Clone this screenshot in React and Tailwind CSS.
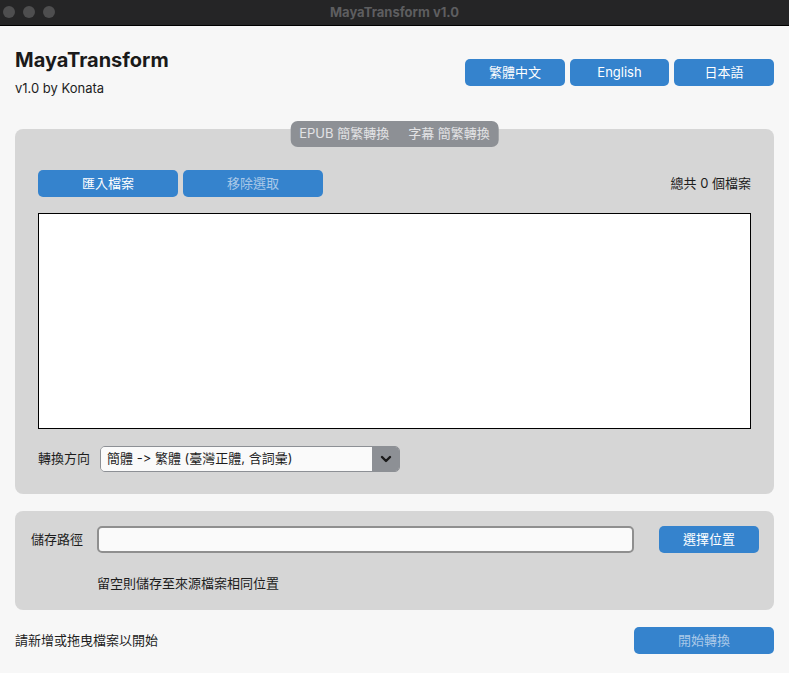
const font = { fontFamily: '"Inter", "Noto Sans CJK TC", sans-serif' };

function BlueButton({ children, disabled, className = '' }) {
  return (
    <button
      className={`h-[27px] rounded-[5px] bg-[#3583cd] text-[13px] ${disabled ? 'text-[#a9c8e8]' : 'text-white'} ${className}`}
    >
      {children}
    </button>
  );
}

export default function App() {
  return (
    <div className="w-[789px] h-[673px] bg-[#f7f7f7] text-[#1d1d1d] overflow-hidden [font-feature-settings:'calt'_0]" style={font}>
      {/* Title bar */}
      <div className="relative h-[26px] bg-[#252526] border-b border-black flex items-center justify-center">
        <div className="absolute left-[3px] top-[6px] flex gap-[8px]">
          <span className="w-[12px] h-[12px] rounded-full bg-[#4e4e4f]" />
          <span className="w-[12px] h-[12px] rounded-full bg-[#4e4e4f]" />
          <span className="w-[12px] h-[12px] rounded-full bg-[#4e4e4f]" />
        </div>
        <span className="text-[13px] font-bold text-[#5e5e60]">MayaTransform v1.0</span>
      </div>

      <div className="px-[15px]">
        {/* Header */}
        <div className="flex justify-between items-start pt-[20px]">
          <div>
            <h1 className="text-[20px] leading-[28px] font-bold text-[#1a1a1a]">MayaTransform</h1>
            <p className="text-[13px] leading-[18px] mt-[5px]">v1.0 by Konata</p>
          </div>
          <div className="flex gap-[5px] mt-[13px]">
            <BlueButton className="w-[100px]">繁體中文</BlueButton>
            <BlueButton className="w-[99px]">English</BlueButton>
            <BlueButton className="w-[100px]">日本語</BlueButton>
          </div>
        </div>

        {/* Main panel */}
        <div className="relative mt-[32px] bg-[#d6d6d6] rounded-[8px] pt-[41px] px-[23px] pb-[22px]">
          <div className="absolute -top-[8px] left-1/2 -translate-x-1/2 h-[26px] px-[9px] rounded-[7px] bg-[#8d9095] flex items-center gap-[19px] text-[13px] text-[#e3e3e5]">
            <span>EPUB 簡繁轉換</span>
            <span>字幕 簡繁轉換</span>
          </div>

          <div className="flex items-center">
            <BlueButton className="w-[140px]">匯入檔案</BlueButton>
            <BlueButton disabled className="w-[140px] ml-[5px]">移除選取</BlueButton>
            <span className="ml-auto text-[13px]">總共 0 個檔案</span>
          </div>

          <div className="mt-[16px] h-[216px] bg-white border border-black" />

          <div className="mt-[17px] flex items-center">
            <span className="text-[13px] w-[62px]">轉換方向</span>
            <div className="flex h-[26px] w-[300px] rounded-[5px] border border-[#8d9095] overflow-hidden">
              <div className="flex-1 bg-[#fafafa] flex items-center pl-[6px] text-[13px]">
                簡體 -&gt; 繁體 (臺灣正體, 含詞彙)
              </div>
              <div className="w-[27px] bg-[#8d9095] flex items-center justify-center">
                <svg width="12" height="8" viewBox="0 0 12 8">
                  <path d="M2 2 L6 6 L10 2" fill="none" stroke="#1a1a1a" strokeWidth="2.4" strokeLinecap="round" strokeLinejoin="round" />
                </svg>
              </div>
            </div>
          </div>
        </div>

        {/* Output panel */}
        <div className="mt-[17px] bg-[#d6d6d6] rounded-[8px] pt-[15px] pl-[16px] pr-[15px] h-[99px]">
          <div className="flex items-center">
            <span className="text-[13px] w-[66px]">儲存路徑</span>
            <div className="flex-1 h-[27px] rounded-[5px] border-2 border-[#8f8f8f] bg-[#fafafa]" />
            <BlueButton className="w-[100px] ml-[25px]">選擇位置</BlueButton>
          </div>
          <p className="mt-[21px] pl-[66px] text-[13px] leading-[18px]">留空則儲存至來源檔案相同位置</p>
        </div>

        {/* Footer */}
        <div className="mt-[17px] flex items-center justify-between">
          <span className="text-[13px]">請新增或拖曳檔案以開始</span>
          <BlueButton disabled className="w-[140px]">開始轉換</BlueButton>
        </div>
      </div>
    </div>
  );
}
